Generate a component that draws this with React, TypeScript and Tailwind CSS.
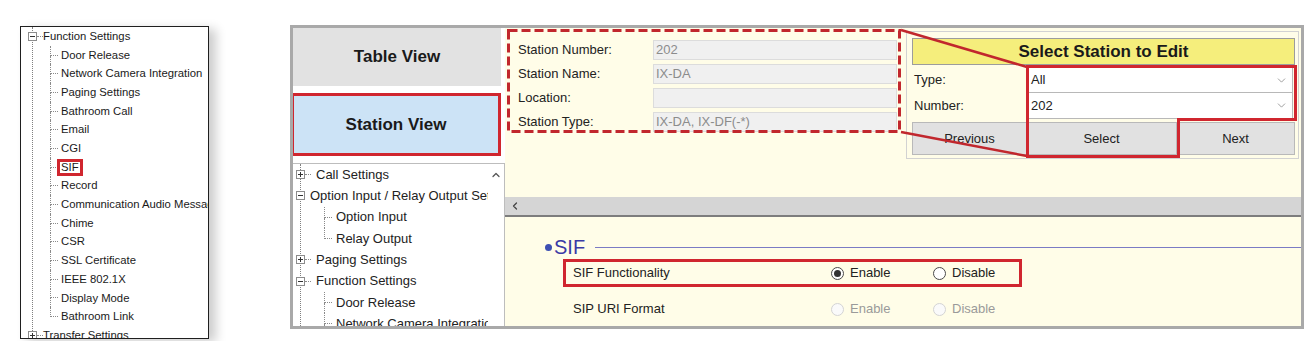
import { ChevronDown, ChevronLeft, ChevronUp } from "lucide-react";
import type { ReactNode } from "react";

// --- TREE PIECES ---
function Box({ open }: { open: boolean }) {
  return (
    <svg width="9" height="9" viewBox="0 0 9 9" className="-ml-[5px] shrink-0">
      <rect x="0.5" y="0.5" width="8" height="8" fill="#fff" stroke="#8c8c8c" />
      <path d="M2 4.5h5" stroke="#333" />
      {!open && <path d="M4.5 2v5" stroke="#333" />}
    </svg>
  );
}

function Parent({ label, open, row, text }: { label: string; open: boolean; row: string; text: string }) {
  return (
    <div className={`flex items-center ${row}`}>
      <Box open={open} />
      <span className="w-[6px] border-t border-dotted border-[#8a8a8a]" />
      <span className={text}>{label}</span>
    </div>
  );
}

function Child({ label, last, row, indent, text }: { label: ReactNode; last?: boolean; row: string; indent: string; text: string }) {
  return (
    <div className={`flex ${row} ${indent}`}>
      <div className="w-[8px] flex flex-col shrink-0">
        <div className="flex-1 border-l border-b border-dotted border-[#8a8a8a]" />
        <div className={last ? "flex-1" : "flex-1 border-l border-dotted border-[#8a8a8a]"} />
      </div>
      <div className={`flex items-center ${text}`}>{label}</div>
    </div>
  );
}

const functionItems = [
  "Door Release",
  "Network Camera Integration",
  "Paging Settings",
  "Bathroom Call",
  "Email",
  "CGI",
  "SIF",
  "Record",
  "Communication Audio Messages",
  "Chime",
  "CSR",
  "SSL Certificate",
  "IEEE 802.1X",
  "Display Mode",
  "Bathroom Link",
];

// --- LEFT CUTOUT TREE ---
function SmallTree() {
  return (
    <div className="ml-[20px] mt-[26px] w-[189px] h-[313px] shrink-0 border border-[#1f1f1f] bg-white overflow-hidden shadow-[7px_3px_10px_rgba(0,0,0,0.2)] text-[11.3px] text-[#1a1a1a] whitespace-nowrap">
      <div className="ml-[11px] border-l border-dotted border-[#808080]">
        <Parent label="Function Settings" open row="h-[18.7px]" text="" />
        {functionItems.map((item, i) => (
          <Child
            key={item}
            row="h-[18.7px]"
            indent="pl-[17px]"
            text="pl-[3px]"
            last={i === functionItems.length - 1}
            label={
              item === "SIF" ? (
                <span className="-ml-[4px] border-[3px] border-[#d0262f] px-[1px] leading-[11px]">SIF</span>
              ) : (
                item
              )
            }
          />
        ))}
        <Parent label="Transfer Settings" open={false} row="h-[18.7px]" text="" />
      </div>
    </div>
  );
}

// --- RADIO ---
function Radio({ checked, disabled, label }: { checked?: boolean; disabled?: boolean; label: string }) {
  return (
    <div className="flex items-center gap-[6px]">
      <span
        className={
          disabled
            ? "w-[13px] h-[13px] rounded-full border border-[#d4d4d4] bg-[#fafafa]"
            : "w-[13px] h-[13px] rounded-full border border-[#4a4a4a] bg-white flex items-center justify-center"
        }
      >
        {checked && <span className="w-[7px] h-[7px] rounded-full bg-[#333]" />}
      </span>
      <span className={disabled ? "text-[#9a9a9a]" : "text-[#222]"}>{label}</span>
    </div>
  );
}

const fields = [
  { label: "Station Number:", value: "202" },
  { label: "Station Name:", value: "IX-DA" },
  { label: "Location:", value: "" },
  { label: "Station Type:", value: "IX-DA, IX-DF(-*)" },
];

// --- MAIN WINDOW ---
function MainWindow() {
  return (
    <div className="ml-[81px] mt-[25px] w-[1014px] h-[304px] shrink-0 border-[3px] border-[#a9a9a9] bg-white flex text-[13px] text-[#222]">
      {/* Left column */}
      <div className="w-[212px] flex flex-col overflow-hidden">
        <div className="w-[208px] h-[58px] shrink-0 bg-[#e2e2e2] flex items-center justify-center font-bold text-[17px] text-[#1a1a1a]">
          Table View
        </div>
        <div className="mt-[7px] -ml-[2px] w-[210px] h-[63px] shrink-0 border-[3px] border-[#d0262f] bg-[#cce3f6] flex items-center justify-center font-bold text-[17px] text-[#1a1a1a]">
          Station View
        </div>
        <div className="mt-[7px] -ml-[2px] w-[214px] h-[180px] shrink-0 border border-[#bdbdbd] bg-white flex whitespace-nowrap">
          <div className="flex-1 overflow-hidden">
            <div className="ml-[8px] border-l border-dotted border-[#808080]">
              <Parent label="Call Settings" open={false} row="h-[21.3px]" text="pl-[5px]" />
              <Parent label="Option Input / Relay Output Settings" open row="h-[21.3px]" text="pl-[5px]" />
              <Child label="Option Input" row="h-[21.3px]" indent="pl-[23px]" text="pl-[4px]" />
              <Child label="Relay Output" last row="h-[21.3px]" indent="pl-[23px]" text="pl-[4px]" />
              <Parent label="Paging Settings" open={false} row="h-[21.3px]" text="pl-[5px]" />
              <Parent label="Function Settings" open row="h-[21.3px]" text="pl-[5px]" />
              <Child label="Door Release" row="h-[21.3px]" indent="pl-[23px]" text="pl-[4px]" />
              <Child label="Network Camera Integration" row="h-[21.3px]" indent="pl-[23px]" text="pl-[4px]" />
              <Child label="Paging Settings" row="h-[21.3px]" indent="pl-[23px]" text="pl-[4px]" />
            </div>
          </div>
          <div className="w-[16px] flex justify-center pt-[5px]">
            <ChevronUp size={12} strokeWidth={2.5} color="#555" />
          </div>
        </div>
      </div>

      {/* Right column */}
      <div className="w-[796px] flex flex-col">
        <div className="h-[169px] shrink-0 bg-[#fffde8] flex items-start">
          <div className="w-[401px] pl-[13px] pt-[12px] flex flex-col gap-[4px]">
            {fields.map((f) => (
              <div key={f.label} className="flex items-center h-[20px]">
                <span className="w-[135px]">{f.label}</span>
                <div className="w-[244px] h-[20px] bg-[#f0f0f0] border border-[#dcdcdc] px-[2px] leading-[18px] text-[#8c8c8c]">
                  {f.value}
                </div>
              </div>
            ))}
          </div>
          <div className="mt-[3px] w-[393px] h-[128px] border border-[#d2d2d2] pl-[5px] pr-[3px] pt-[6px]">
            <div className="h-[27px] border border-[#9c9c9c] bg-[#f5ee7c] flex items-center justify-center font-bold text-[17px] text-[#1a1a1a]">
              Select Station to Edit
            </div>
            <div className="mt-[2px]">
              <div className="flex items-center h-[26px]">
                <span className="w-[115px] pl-[2px]">Type:</span>
                <div className="w-[266px] h-full bg-white border border-[#b8b8b8] flex items-center justify-between pl-[3px] pr-[4px]">
                  <span>All</span>
                  <ChevronDown size={13} strokeWidth={1.5} color="#8a8a8a" />
                </div>
              </div>
              <div className="flex items-center h-[26px]">
                <span className="w-[115px] pl-[2px]">Number:</span>
                <div className="w-[266px] h-full bg-white border border-t-0 border-[#b8b8b8] flex items-center justify-between pl-[3px] pr-[4px]">
                  <span>202</span>
                  <ChevronDown size={13} strokeWidth={1.5} color="#8a8a8a" />
                </div>
              </div>
            </div>
            <div className="mt-[3px] flex h-[33px]">
              <div className="w-[115px] bg-[#e1e1e1] border border-[#b9b9b9] flex items-center justify-center">Previous</div>
              <div className="w-[150px] bg-[#e1e1e1] border border-l-0 border-[#b9b9b9] flex items-center justify-center">Select</div>
              <div className="w-[118px] bg-[#e1e1e1] border border-l-0 border-[#b9b9b9] flex items-center justify-center">Next</div>
            </div>
          </div>
        </div>

        <div className="h-[18px] shrink-0 bg-[#d5d5d5] flex items-center pl-[4px]">
          <ChevronLeft size={12} strokeWidth={2.5} color="#444" />
        </div>
        <div className="h-[2px] shrink-0 bg-[#7d7d7d]" />

        <div className="flex-1 bg-[#fffde8] pt-[18px]">
          <div className="flex items-center h-[24px] pl-[40px]">
            <span className="w-[7px] h-[7px] rounded-full bg-[#3d4fb3]" />
            <span className="ml-[2px] text-[20px] leading-none text-[#3a3aa6]">SIF</span>
            <span className="flex-1 ml-[10px] h-px bg-[#7b7bc4]" />
          </div>
          <div className="ml-[58px] w-[459px] h-[28px] border-[3px] border-[#d0262f] flex items-center pl-[7px]">
            <span className="w-[258px]">SIF Functionality</span>
            <div className="w-[102px]">
              <Radio checked label="Enable" />
            </div>
            <Radio label="Disable" />
          </div>
          <div className="ml-[58px] mt-[9px] h-[26px] flex items-center pl-[10px]">
            <span className="w-[258px]">SIP URI Format</span>
            <div className="w-[102px]">
              <Radio disabled label="Enable" />
            </div>
            <Radio disabled label="Disable" />
          </div>
        </div>
      </div>
    </div>
  );
}

// --- ANNOTATIONS (red callouts drawn over the screenshot) ---
function Overlay() {
  return (
    <svg className="absolute inset-0 pointer-events-none" width="1312" height="341" viewBox="0 0 1312 341">
      <rect x="508.5" y="30.5" width="391" height="101" fill="none" stroke="#c1272d" strokeWidth="3" strokeDasharray="9 4" />
      <path d="M901 30 L1027 67" stroke="#c1272d" strokeWidth="2.5" />
      <path d="M901 132 L1027 156" stroke="#c1272d" strokeWidth="2.5" />
      <path d="M1027.5 66.5 H1295.5 V119.5 H1178.5 V156.5 H1027.5 Z" fill="none" stroke="#d0262f" strokeWidth="3" />
    </svg>
  );
}

export default function App() {
  return (
    <div className="relative w-[1312px] h-[341px] overflow-hidden bg-white flex items-start font-['Liberation_Sans',Arial,sans-serif]">
      <SmallTree />
      <MainWindow />
      <Overlay />
    </div>
  );
}
